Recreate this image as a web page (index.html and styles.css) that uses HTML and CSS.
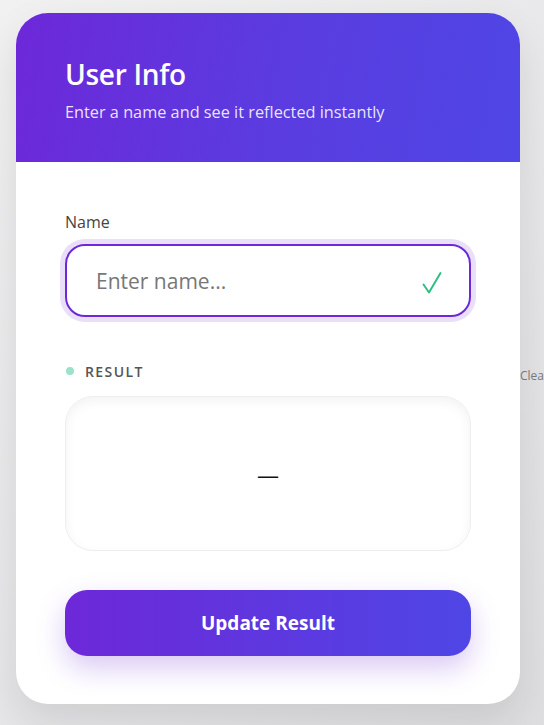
FILE: index.html
```html
<!DOCTYPE html>
<html lang="en">
<head>
<meta charset="utf-8">
<title>User Info</title>
<link rel="stylesheet" href="styles.css">
</head>
<body>
<div class="page">
  <div class="card">
    <header class="card-header">
      <h1 class="title">User Info</h1>
      <p class="subtitle">Enter a name and see it reflected instantly</p>
    </header>
    <div class="card-body">
      <label class="field-label" for="name">Name</label>
      <div class="input-wrap">
        <input id="name" class="name-input" type="text" placeholder="Enter name...">
        <svg class="check" width="20" height="24" viewBox="0 0 20 24" aria-hidden="true">
          <path d="M1.5 13.5 L7 21.5 L18.5 2" fill="none" stroke="#2fbf86" stroke-width="2" stroke-linecap="round" stroke-linejoin="round"/>
        </svg>
      </div>
      <div class="result-head">
        <span class="dot"></span>
        <span class="result-label">RESULT</span>
      </div>
      <div class="result-box"><span class="result-value">—</span></div>
      <button class="update-btn" type="button">Update Result</button>
    </div>
    <span class="clear-link">Clear</span>
  </div>
</div>
</body>
</html>
```
FILE: styles.css
```css
* { box-sizing: border-box; }
html, body { margin: 0; padding: 0; }
body {
  width: 544px;
  height: 725px;
  overflow: hidden;
  font-family: "Open Sans", "Noto Sans", sans-serif;
  background: linear-gradient(135deg, #f1f1f2 0%, #e6e6e8 60%, #dedee0 100%);
}
.page {
  padding: 13px 0 0 16px;
}
.card {
  position: relative;
  width: 504px;
  height: 691px;
  background: #fff;
  border-radius: 32px;
  box-shadow: 0 18px 40px rgba(0,0,0,0.10);
}
.card-header {
  height: 149px;
  border-radius: 32px 32px 0 0;
  background: linear-gradient(100deg, #6d28d9 0%, #5b3be0 50%, #4f46e5 100%);
  padding: 43px 49px 0;
  color: #fff;
}
.title {
  margin: 0;
  font-size: 28px;
  font-weight: 600;
  line-height: 36px;
  letter-spacing: -0.3px;
}
.subtitle {
  margin: 10px 0 0;
  font-size: 16.3px;
  line-height: 20px;
  color: rgba(255,255,255,0.88);
}
.card-body {
  padding: 50px 49px 48px;
  display: flex;
  flex-direction: column;
}
.field-label {
  font-size: 16px;
  line-height: 20px;
  color: #444;
  margin-bottom: 12px;
}
.input-wrap {
  position: relative;
  height: 73px;
  border: 2px solid #6d28d9;
  border-radius: 20px;
  box-shadow: 0 0 0 5px rgba(109,40,217,0.15);
  display: flex;
  align-items: center;
}
.name-input {
  flex: 1;
  min-width: 0;
  border: none;
  outline: none;
  background: transparent;
  font-family: inherit;
  font-size: 21px;
  padding: 0 0 0 29px;
  color: #333;
}
.name-input::placeholder { color: #777; }
.check {
  margin-right: 27px;
  margin-top: 4px;
  flex: none;
}
.result-head {
  display: flex;
  align-items: center;
  margin-top: 45px;
  height: 18px;
}
.dot {
  width: 8px;
  height: 8px;
  border-radius: 50%;
  background: #9be3c8;
  margin: 0 11px 0 1px;
}
.result-label {
  font-size: 14px;
  font-weight: 600;
  letter-spacing: 1.4px;
  color: #555;
}
.result-box {
  margin-top: 16px;
  height: 155px;
  border: 1px solid #eeeeee;
  border-radius: 28px;
  box-shadow: inset 0 4px 12px rgba(0,0,0,0.05);
  display: flex;
  align-items: center;
  justify-content: center;
}
.result-value {
  font-size: 22px;
  color: #111;
}
.update-btn {
  margin-top: 39px;
  height: 66px;
  border: none;
  border-radius: 22px;
  background: linear-gradient(90deg, #6d28d9 0%, #4f46e5 100%);
  color: #fff;
  font-family: inherit;
  font-size: 19px;
  font-weight: 700;
  box-shadow: 0 12px 28px rgba(109,40,217,0.25);
}
.clear-link {
  position: absolute;
  left: 504px;
  top: 354px;
  font-size: 12px;
  color: #777;
}
```
